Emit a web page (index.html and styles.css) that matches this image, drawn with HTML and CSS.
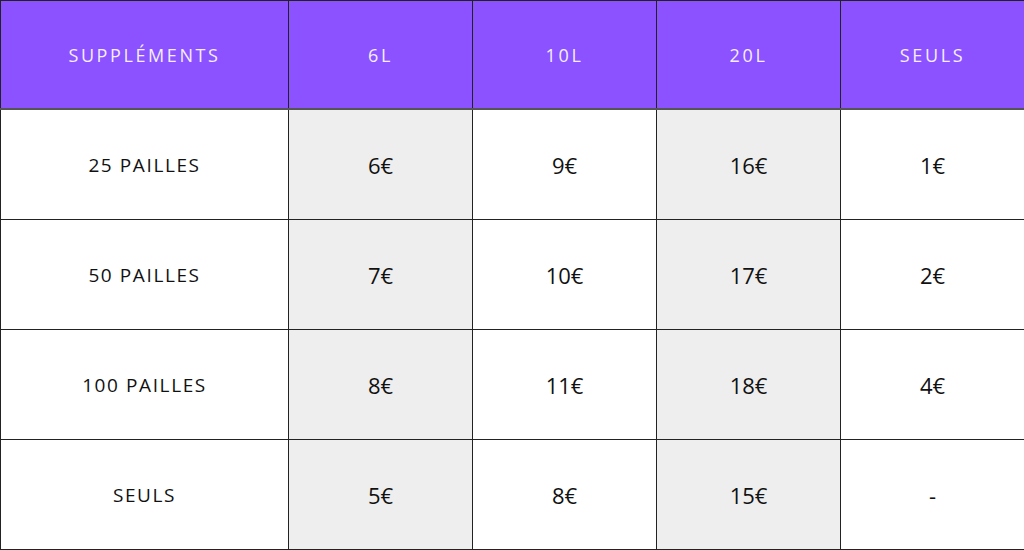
FILE: index.html
```html
<!DOCTYPE html>
<html lang="fr">
<head>
<meta charset="utf-8">
<title>Suppléments</title>
<link rel="stylesheet" href="styles.css">
</head>
<body>
<table class="prices">
  <colgroup>
    <col class="c-label">
    <col class="c-val">
    <col class="c-val">
    <col class="c-val">
    <col class="c-val">
  </colgroup>
  <thead>
    <tr>
      <th>SUPPLÉMENTS</th>
      <th>6L</th>
      <th>10L</th>
      <th>20L</th>
      <th>SEULS</th>
    </tr>
  </thead>
  <tbody>
    <tr>
      <td class="label">25 PAILLES</td>
      <td class="shade">6€</td>
      <td>9€</td>
      <td class="shade">16€</td>
      <td>1€</td>
    </tr>
    <tr>
      <td class="label">50 PAILLES</td>
      <td class="shade">7€</td>
      <td>10€</td>
      <td class="shade">17€</td>
      <td>2€</td>
    </tr>
    <tr>
      <td class="label">100 PAILLES</td>
      <td class="shade">8€</td>
      <td>11€</td>
      <td class="shade">18€</td>
      <td>4€</td>
    </tr>
    <tr>
      <td class="label">SEULS</td>
      <td class="shade">5€</td>
      <td>8€</td>
      <td class="shade">15€</td>
      <td>-</td>
    </tr>
  </tbody>
</table>
</body>
</html>
```

FILE: styles.css
```css
html, body {
  margin: 0;
  padding: 0;
  background: #ffffff;
}

.prices {
  width: 1024px;
  border-collapse: collapse;
  table-layout: fixed;
  font-family: "Open Sans", "Liberation Sans", sans-serif;
  color: #111;
}

.c-label { width: 288px; }
.c-val { width: 184px; }

.prices th,
.prices td {
  border: 1px solid #222;
  text-align: center;
  vertical-align: middle;
  padding: 0;
}

.prices thead th {
  height: 107px;
  background: #8c52ff;
  color: #f4eeff;
  font-weight: 400;
  font-size: 18px;
  letter-spacing: 2.6px;
  border-bottom: 2px solid #555;
}

.prices tbody td {
  height: 109px;
  font-size: 22px;
  font-weight: 400;
}

.prices tbody td.label {
  font-size: 19px;
  letter-spacing: 1.6px;
}

.prices tbody td.shade {
  background: #eeeeee;
}
```
